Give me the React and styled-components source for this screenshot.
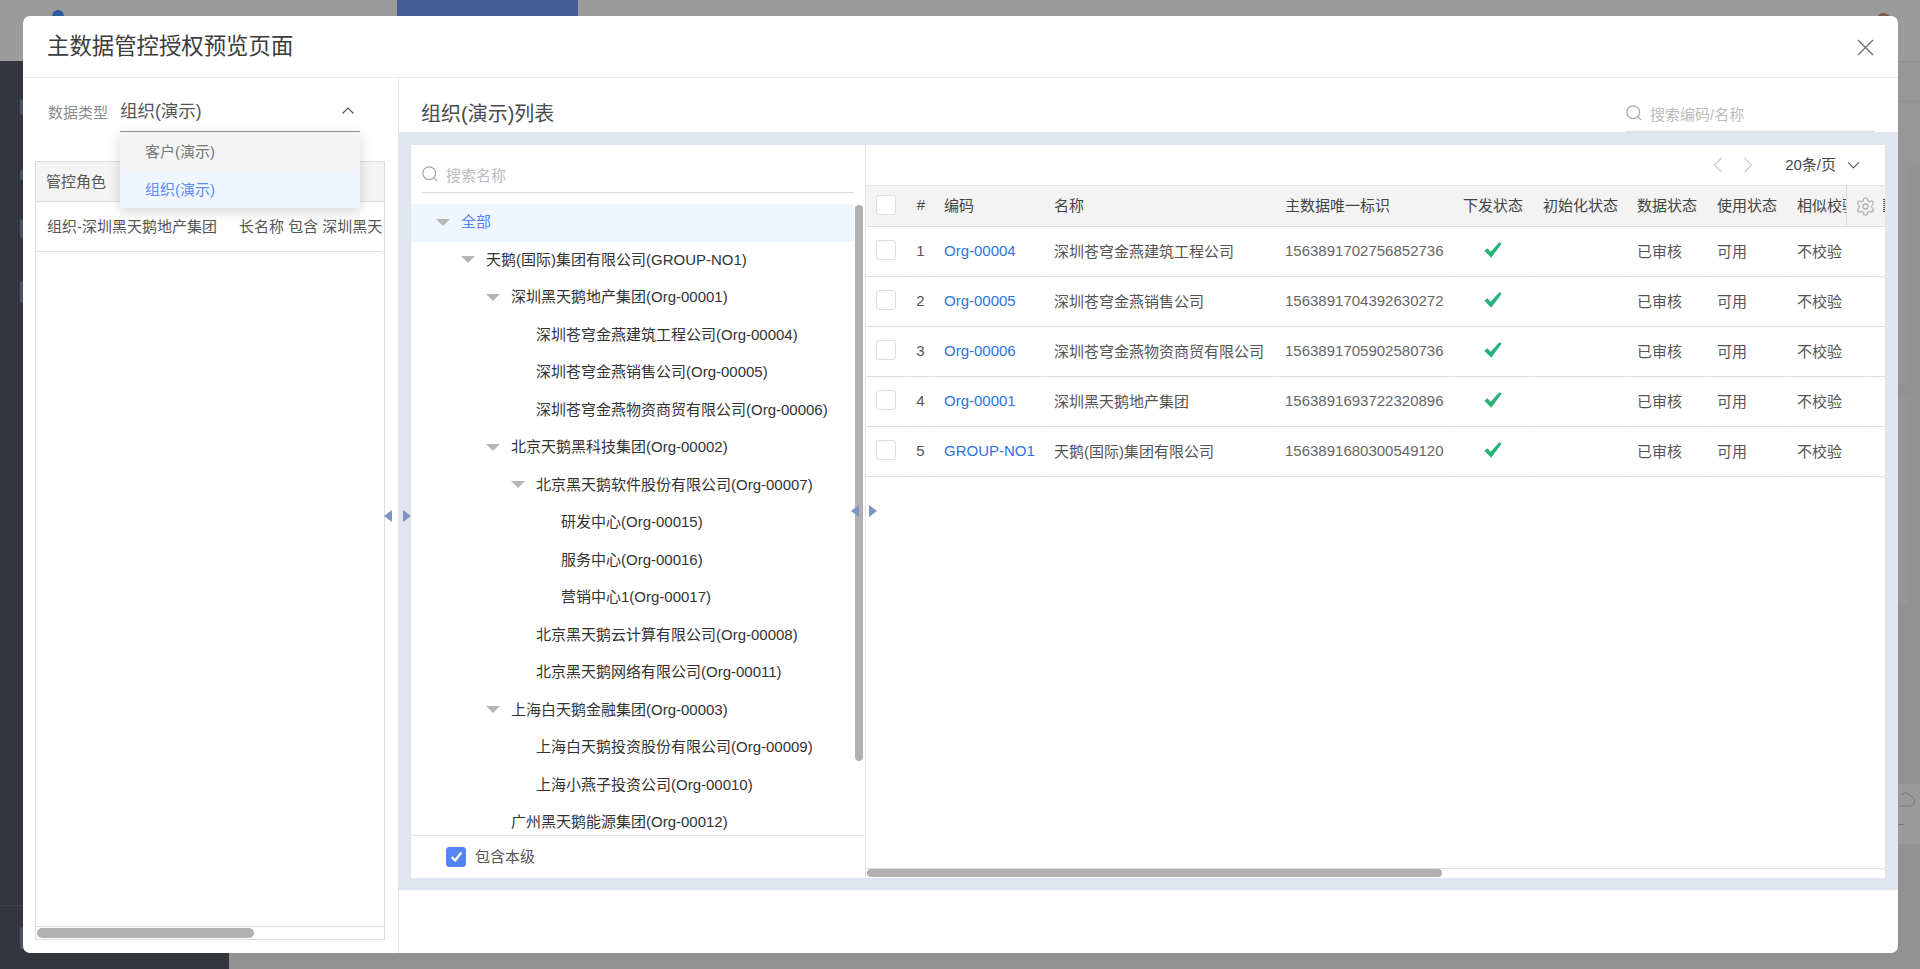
import React from 'react';
import styled, { createGlobalStyle } from 'styled-components';
import { Settings } from 'lucide-react';

const Global = createGlobalStyle`
  html, body { margin: 0; padding: 0; height: 100%; overflow: hidden; }
  #root { height: 100%; }
  * { box-sizing: border-box; }
  body { font-family: "Liberation Sans", "Noto Sans CJK SC", sans-serif; font-size: 15px; color: #444; }
`;

/* ---------- page behind the mask ---------- */
const Page = styled.div`
  position: relative; width: 1920px; height: 969px; overflow: hidden;
  display: flex; flex-direction: column; background: #929293;
`;
const TopBar = styled.div`
  height: 61px; flex: none; background: #9b9b9b; display: flex; padding-left: 52px; gap: 0;
`;
const LogoDot = styled.div`
  width: 12px; height: 16px; margin-top: 10px; border-radius: 6px 6px 0 0; background: #2a5f9e;
`;
const ActiveTab = styled.div`
  width: 181px; height: 16px; margin-left: 333px; background: #465d95;
`;
const Avatar = styled.div`
  width: 13px; height: 16px; margin-left: auto; margin-right: 30px; margin-top: 13px;
  border-radius: 6px 6px 0 0; background: #7d5a48;
`;
const Under = styled.div`
  flex: 1; display: flex; min-height: 0;
`;
const SideBar = styled.div`
  width: 229px; flex: none; background: #33363f; display: flex; flex-direction: column;
  padding: 38px 0 0 20px;
`;
const SideMark = styled.div`
  width: 10px; height: ${p => p.$h}px; margin-bottom: ${p => p.$gap}px; background: #465468;
  border-radius: 2px;
`;
const SideFoot = styled.div`
  margin: auto 0 0 -20px; height: 64px; border-top: 1px solid #3d4049; padding: 21px 0 0 20px;
`;
const Main = styled.div`
  flex: 1; display: flex; flex-direction: column; align-items: flex-end;
`;
const MainStrip = styled.div`
  width: 100%; height: 41px; border-top: 1px solid #8f8f8f; border-bottom: 1px solid #8f8f8f; background: #969696; flex: none;
`;
const MainGap = styled.div`
  width: 100%; height: 65px; flex: none; background: #969696;
`;
const RailCard = styled.div`
  width: 22px; height: ${p => p.$h}px; margin-bottom: 13px; margin-right: 0; background: #969696; flex: none;
  border-right: 12px solid #929293;
`;
const CloudPanel = styled.div`
  width: 22px; height: 60px; flex: none; background: #9a9a9a; color: #777; margin-top: auto; margin-bottom: 125px;
  display: flex; flex-direction: column;
`;
const CloudRule = styled.div`
  width: 6px; height: 1px; background: #777; margin-top: 12px;
`;

/* ---------- modal ---------- */
const Modal = styled.div`
  position: absolute; left: 23px; top: 16px; width: 1875px; height: 937px;
  background: #fff; border-radius: 7px; display: flex; flex-direction: column; overflow: hidden;
`;
const ModalHeader = styled.header`
  height: 62px; flex: none; border-bottom: 1px solid #e8e8e8; display: flex; align-items: center;
  justify-content: space-between; padding: 0 24px 0 24px;
`;
const ModalTitle = styled.h1`
  margin: 0; font-size: 22.4px; font-weight: 400; color: #3c3c3c; line-height: 30px;
`;
const CloseBtn = styled.button`
  border: 0; background: none; padding: 2px 0 0; width: 17px; height: 19px; display: block; color: #666;
`;
const ModalBody = styled.div`
  flex: 1; display: flex; min-height: 0;
`;

/* left pane */
const LeftPane = styled.section`
  width: 376px; flex: none; border-right: 1px solid #e5e5e5; padding: 0 13px 13px 12px;
  display: flex; flex-direction: column;
`;
const FormRow = styled.div`
  height: 83px; flex: none; display: flex; align-items: flex-start; padding-left: 13px;
`;
const FieldLabel = styled.label`
  width: 72px; flex: none; margin-top: 25px; line-height: 20px; font-size: 15px; color: #8c8c8c;
`;
const SelectBox = styled.div`
  position: relative; width: 240px; height: 54px; border-bottom: 1px solid #8f8f8f;
  padding-top: 21px; display: flex; justify-content: space-between;
`;
const SelectValue = styled.span`
  font-size: 17.5px; line-height: 24px; color: #555;
`;
const SelectChevron = styled.svg`
  width: 14px; height: 9px; margin: 7px 5px 0 0; color: #555;
`;
const Dropdown = styled.ul`
  position: absolute; top: calc(100% + 1px); left: 0; width: 240px; margin: 0; padding: 0; list-style: none;
  background: #fff; box-shadow: 0 4px 12px rgba(0,0,0,.16); z-index: 5;
`;
const DropItem = styled.li`
  height: ${p => p.$active ? 37 : 39}px; line-height: ${p => p.$active ? 37 : 39}px; padding-left: 25px; font-size: 15px;
  color: ${p => p.$active ? '#5b8cf7' : '#777'};
  background: ${p => p.$active ? '#f0f6ff' : '#f5f5f5'};
`;
const RoleTable = styled.div`
  flex: 1; min-height: 0; border: 1px solid #dcdcdc; display: flex; flex-direction: column;
`;
const RoleHead = styled.div`
  height: 40px; flex: none; background: #f4f4f4; border-bottom: 1px solid #dcdcdc; line-height: 40px;
  padding-left: 10px; color: #555; font-size: 15px;
`;
const RoleRow = styled.div`
  height: 50px; flex: none; border-bottom: 1px solid #dcdcdc; display: flex; align-items: center; overflow: hidden;
  white-space: nowrap; margin-right: 2px; color: #555; font-size: 15px; padding-bottom: 2px;
`;
const RoleName = styled.span`
  width: 203px; flex: none; padding-left: 11px;
`;
const RoleSpacer = styled.div`
  flex: 1;
`;
const ScrollTrack = styled.div`
  height: 13px; flex: none; border-top: 1px solid #dcdcdc; padding: 1px 0 0 1px;
`;
const ScrollThumb = styled.div`
  height: ${p => p.$h}px; width: ${p => p.$w}px; border-radius: 5px; background: #b1b1b1;
`;

/* right pane */
const RightPane = styled.section`
  flex: 1; min-width: 0; display: flex; flex-direction: column;
`;
const TitleRow = styled.div`
  height: 54px; flex: none; display: flex; justify-content: space-between; align-items: flex-end;
  padding: 0 23px 0 22px;
`;
const ListTitle = styled.h2`
  margin: 0 0 3px; font-size: 20px; font-weight: 400; color: #4a4a4a; line-height: 30px;
`;
const SearchBar = styled.div`
  width: ${p => p.$w}px; height: 35px; border-bottom: 1px solid ${p => p.$line}; display: flex; align-items: center; gap: 8px;
  padding: 0 0 2px 1px; flex: none; color: #bbb; font-size: 15px;
`;
const SearchIcon = styled.svg`
  width: 16px; height: 16px; color: #a8a8a8; flex: none;
`;
const Band = styled.div`
  height: 758px; flex: none; background: #e1e5ef; padding: 13px 13px 12px 12px; display: flex;
`;
const TreePanel = styled.div`
  width: 454px; flex: none; background: #fff; display: flex; flex-direction: column;
`;
const TreeSearchWrap = styled.div`
  height: 59px; flex: none; padding: 13px 11px 0 10px;
`;
const TreeView = styled.div`
  position: relative; height: 631px; flex: none; overflow: hidden;
`;
const TreeRow = styled.div`
  height: 37.5px; width: 443px; display: flex; align-items: center; white-space: nowrap;
  padding-left: ${p => 25 + p.$level * 25}px; padding-bottom: 4px; font-size: 15px;
  color: ${p => p.$active ? '#4f82f5' : '#333'};
  background: ${p => p.$active ? '#f0f6ff' : 'transparent'};
`;
const Caret = styled.span`
  width: 25px; flex: none; display: flex;
  &::before {
    content: ''; display: ${p => p.$hidden ? 'none' : 'block'}; width: 0; height: 0; margin-top: 3px;
    border-left: 7px solid transparent; border-right: 7px solid transparent; border-top: 7px solid #b5b5b5;
  }
`;
const TreeThumb = styled.div`
  position: absolute; right: 2px; top: 1px; width: 8px; height: 556px; border-radius: 4px; background: #b1b1b1;
`;
const TreeFoot = styled.div`
  flex: 1; width: 453px; border-top: 1px solid #e3e3e3; display: flex; align-items: center; gap: 9px; padding: 0 0 1px 35px;
  font-size: 15px; color: #555;
`;
const FootLabel = styled.span`
  margin-top: -3px;
`;
const Check = styled.span`
  width: 20px; height: 20px; flex: none; border-radius: 3px; display: inline-flex; align-items: center; justify-content: center;
  border: 1px solid ${p => p.$on ? '#5585f5' : '#ddd'}; background: ${p => p.$on ? '#5585f5' : '#fff'}; color: #fff;
`;
const TablePanel = styled.div`
  flex: 1; min-width: 0; margin-left: 0; background: #fff; border-left: 1px solid #e3e3e3; display: flex; flex-direction: column;
`;
const Toolbar = styled.div`
  height: 40px; flex: none; display: flex; align-items: center; justify-content: flex-end; padding: 0 25px 0 0; color: #444;
`;
const PagerBtn = styled.svg`
  width: 10px; height: 16px; color: #ccc; margin-right: ${p => p.$gap}px; margin-bottom: 1px;
`;
const PageSize = styled.span`
  font-size: 15px; margin-right: 11px; color: #444; margin-bottom: 4px;
`;
const SizeChevron = styled.svg`
  width: 13px; height: 8px; color: #666;
`;
const TableWrap = styled.div`
  position: relative; flex: 1; min-height: 0; overflow: hidden;
`;
const Grid = styled.table`
  width: 1806px; table-layout: fixed; border-collapse: separate; border-spacing: 0;
`;
const Th = styled.th`
  height: 42px; padding: 0 0 4px ${p => p.$pad ?? 10}px; text-align: ${p => p.$center ? 'center' : 'left'}; font-weight: 400; font-size: 15px;
  color: #444; background: #f3f3f3; border-top: 1px solid #e3e3e3; border-bottom: 1px solid #dedede; white-space: nowrap; overflow: hidden;
`;
const CheckTh = styled(Th)`
  padding-bottom: 0;
`;
const Td = styled.td`
  height: 50px; padding: 0 0 2px ${p => p.$pad ?? 10}px; text-align: ${p => p.$center ? 'center' : 'left'}; font-size: 15px;
  color: ${p => p.$muted ? '#666' : '#555'}; border-bottom: 1px solid #dedede; border-right: 1px solid #fff; white-space: nowrap; overflow: hidden;
`;
const IconTd = styled(Td)`
  padding-bottom: 0;
`;
const IndexCell = styled.span`
  position: relative; left: 1px;
`;
const CodeLink = styled.a`
  color: #2c74df; text-decoration: none;
`;
const CheckCell = styled.span`
  display: block; margin-top: -3px; line-height: 0;
`;
const GearCell = styled.div`
  position: absolute; left: 980px; top: 1px; width: 37px; height: 40px; background: #f3f3f3; border-left: 1px solid #dcdcdc;
  display: flex; align-items: center; padding-left: 8px; color: #a6a6a6;
`;
const TableScroll = styled(ScrollTrack)`
  height: 10px; padding: 0 0 0 1px; border-top: 1px solid #dcdcdc;
`;

/* splitter arrows */
const Splitter = styled.div`
  position: absolute; left: ${p => p.$left}px; top: ${p => p.$top}px; display: flex; gap: ${p => p.$gap}px; z-index: 3;
`;
const Arrow = styled.span`
  width: 0; height: 0; border-top: 6px solid transparent; border-bottom: 6px solid transparent;
  ${p => p.$dir === 'left' ? 'border-right: 8px solid #7d93c4;' : 'border-left: 8px solid #7d93c4;'}
`;

const SearchGlyph = () => (
  <SearchIcon viewBox="0 0 16 16" fill="none" stroke="currentColor" strokeWidth="1.2">
    <circle cx="7.2" cy="7.2" r="6.4" />
    <path d="M11.8 11.8 15 15" />
  </SearchIcon>
);

const Tick = ({ size = 15, w = 2.2 }) => (
  <svg width={size} height={size} viewBox="0 0 14 14" fill="none" stroke="currentColor" strokeWidth={w}>
    <path d="M2.5 7.5 5.8 10.6 11.5 3.2" />
  </svg>
);

const GreenTick = () => (
  <svg width="18" height="16" viewBox="0 0 17 15">
    <path fill="#2ab27b" d="M0.3 8.2 3.2 5.8 6.3 9.2 14.4 0.2 16.8 1.4 6.8 14.8Z" />
  </svg>
);

const tree = [
  ['全部', 0, true],
  ['天鹅(国际)集团有限公司(GROUP-NO1)', 1, true],
  ['深圳黑天鹅地产集团(Org-00001)', 2, true],
  ['深圳苍穹金燕建筑工程公司(Org-00004)', 3, false],
  ['深圳苍穹金燕销售公司(Org-00005)', 3, false],
  ['深圳苍穹金燕物资商贸有限公司(Org-00006)', 3, false],
  ['北京天鹅黑科技集团(Org-00002)', 2, true],
  ['北京黑天鹅软件股份有限公司(Org-00007)', 3, true],
  ['研发中心(Org-00015)', 4, false],
  ['服务中心(Org-00016)', 4, false],
  ['营销中心1(Org-00017)', 4, false],
  ['北京黑天鹅云计算有限公司(Org-00008)', 3, false],
  ['北京黑天鹅网络有限公司(Org-00011)', 3, false],
  ['上海白天鹅金融集团(Org-00003)', 2, true],
  ['上海白天鹅投资股份有限公司(Org-00009)', 3, false],
  ['上海小燕子投资公司(Org-00010)', 3, false],
  ['广州黑天鹅能源集团(Org-00012)', 2, false],
];

const rows = [
  ['Org-00004', '深圳苍穹金燕建筑工程公司', '1563891702756852736'],
  ['Org-00005', '深圳苍穹金燕销售公司', '1563891704392630272'],
  ['Org-00006', '深圳苍穹金燕物资商贸有限公司', '1563891705902580736'],
  ['Org-00001', '深圳黑天鹅地产集团', '1563891693722320896'],
  ['GROUP-NO1', '天鹅(国际)集团有限公司', '1563891680300549120'],
];

const cols = [40, 28, 112, 229, 178, 80, 95, 80, 80, 80, 804];

export default function App() {
  return (
    <Page>
      <Global />
      <TopBar>
        <LogoDot />
        <ActiveTab />
        <Avatar />
      </TopBar>
      <Under>
        <SideBar>
          <SideMark $h={16} $gap={55} />
          <SideMark $h={10} $gap={39} />
          <SideMark $h={19} $gap={43} />
          <SideMark $h={22} $gap={0} />
          <SideFoot><SideMark $h={22} $gap={0} /></SideFoot>
        </SideBar>
        <Main>
          <MainStrip />
          <MainGap />
          <RailCard $h={218} />
          <RailCard $h={206} />
          <CloudPanel>
            <svg width="22" height="28" viewBox="0 0 22 28" fill="none" stroke="currentColor" strokeWidth="1">
              <path d="M1 22H11a5 5 0 0 0 1-10C10 8 6 8 4 11" />
            </svg>
            <CloudRule />
          </CloudPanel>
        </Main>
      </Under>

      <Modal>
        <ModalHeader>
          <ModalTitle>主数据管控授权预览页面</ModalTitle>
          <CloseBtn aria-label="关闭">
            <svg width="17" height="17" viewBox="0 0 17 17" fill="none" stroke="currentColor" strokeWidth="1.2">
              <path d="M1 1 16 16M16 1 1 16" />
            </svg>
          </CloseBtn>
        </ModalHeader>
        <ModalBody>
          <LeftPane>
            <FormRow>
              <FieldLabel>数据类型</FieldLabel>
              <SelectBox>
                <SelectValue>组织(演示)</SelectValue>
                <SelectChevron viewBox="0 0 14 9" fill="none" stroke="currentColor" strokeWidth="1.2">
                  <path d="M1.5 7.5 7 2l5.5 5.5" />
                </SelectChevron>
                <Dropdown>
                  <DropItem>客户(演示)</DropItem>
                  <DropItem $active>组织(演示)</DropItem>
                </Dropdown>
              </SelectBox>
            </FormRow>
            <RoleTable>
              <RoleHead>管控角色</RoleHead>
              <RoleRow>
                <RoleName>组织-深圳黑天鹅地产集团</RoleName>
                <span>长名称 包含 深圳黑天鹅地产集团</span>
              </RoleRow>
              <RoleSpacer />
              <ScrollTrack><ScrollThumb $w={217} $h={10} /></ScrollTrack>
            </RoleTable>
          </LeftPane>

          <RightPane>
            <TitleRow>
              <ListTitle>组织(演示)列表</ListTitle>
              <SearchBar $w={250} $line="#dcdcdc"><SearchGlyph />搜索编码/名称</SearchBar>
            </TitleRow>
            <Band>
              <TreePanel>
                <TreeSearchWrap>
                  <SearchBar $w={433} $line="#dcdcdc"><SearchGlyph />搜索名称</SearchBar>
                </TreeSearchWrap>
                <TreeView>
                  {tree.map(([label, level, open], i) => (
                    <TreeRow key={label} $level={level} $active={i === 0}>
                      <Caret $hidden={!open} />
                      {label}
                    </TreeRow>
                  ))}
                  <TreeThumb />
                </TreeView>
                <TreeFoot>
                  <Check $on><Tick /></Check>
                  <FootLabel>包含本级</FootLabel>
                </TreeFoot>
              </TreePanel>

              <TablePanel>
                <Toolbar>
                  <PagerBtn $gap={20} viewBox="0 0 10 16" fill="none" stroke="currentColor" strokeWidth="1.2"><path d="M8.5 1 1.5 8l7 7" /></PagerBtn>
                  <PagerBtn $gap={32} viewBox="0 0 10 16" fill="none" stroke="currentColor" strokeWidth="1.2"><path d="M1.5 1l7 7-7 7" /></PagerBtn>
                  <PageSize>20条/页</PageSize>
                  <SizeChevron viewBox="0 0 13 8" fill="none" stroke="currentColor" strokeWidth="1.2"><path d="M1 1.2 6.5 6.8 12 1.2" /></SizeChevron>
                </Toolbar>
                <TableWrap>
                  <Grid>
                    <colgroup>{cols.map((w, i) => <col key={i} width={w} />)}</colgroup>
                    <thead>
                      <tr>
                        <CheckTh $pad={10}><Check /></CheckTh>
                        <Th $center $pad={2}>#</Th>
                        <Th>编码</Th>
                        <Th $pad={8}>名称</Th>
                        <Th>主数据唯一标识</Th>
                        <Th>下发状态</Th>
                        <Th>初始化状态</Th>
                        <Th $pad={9}>数据状态</Th>
                        <Th $pad={9}>使用状态</Th>
                        <Th $pad={9}>相似校验</Th>
                        <Th>重复状态</Th>
                      </tr>
                    </thead>
                    <tbody>
                      {rows.map(([code, name, id], i) => (
                        <tr key={code}>
                          <IconTd $pad={10}><Check /></IconTd>
                          <Td $center $pad={0}><IndexCell>{i + 1}</IndexCell></Td>
                          <Td><CodeLink>{code}</CodeLink></Td>
                          <Td $pad={8}>{name}</Td>
                          <Td $muted>{id}</Td>
                          <IconTd $center $pad={0}><CheckCell><GreenTick /></CheckCell></IconTd>
                          <Td />
                          <Td $pad={9}>已审核</Td>
                          <Td $pad={9}>可用</Td>
                          <Td $pad={9}>不校验</Td>
                          <Td />
                        </tr>
                      ))}
                    </tbody>
                  </Grid>
                  <GearCell><Settings size={21} strokeWidth={1.2} /></GearCell>
                </TableWrap>
                <TableScroll><ScrollThumb $w={575} $h={8} /></TableScroll>
              </TablePanel>
            </Band>
          </RightPane>
        </ModalBody>
        <Splitter $left={361} $top={494} $gap={11}><Arrow $dir="left" /><Arrow $dir="right" /></Splitter>
        <Splitter $left={828} $top={489} $gap={10}><Arrow $dir="left" /><Arrow $dir="right" /></Splitter>
      </Modal>
    </Page>
  );
}
